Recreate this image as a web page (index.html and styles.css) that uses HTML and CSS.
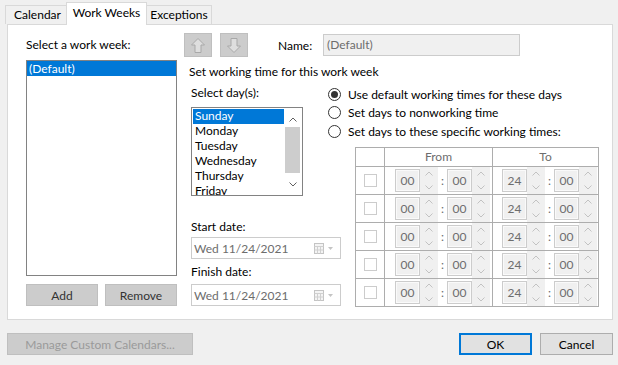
FILE: index.html
```html
<!DOCTYPE html>
<html>
<head>
<meta charset="utf-8">
<link rel="stylesheet" href="styles.css">
</head>
<body>
<div class="dialog">
  <div class="tabs">
    <div class="tab tab-cal">Calendar</div>
    <div class="tab tab-active">Work Weeks</div>
    <div class="tab tab-exc">Exceptions</div>
  </div>
  <div class="panel">
    <div class="left">
      <div class="lbl">Select a work week:</div>
      <div class="weeklist"><div class="sel-row">(Default)</div></div>
      <div class="left-btns"><button class="gbtn">Add</button><button class="gbtn">Remove</button></div>
    </div>
    <div class="right">
      <div class="toprow">
        <div class="arrowbtn"><svg width="14" height="15" viewBox="0 0 14 15"><polygon points="7,0.5 13.5,7 10,7 10,14.5 4,14.5 4,7 0.5,7" fill="#dedede" stroke="#a8a8a8" stroke-width="1"/></svg></div>
        <div class="arrowbtn"><svg width="14" height="15" viewBox="0 0 14 15"><polygon points="7,14.5 13.5,8 10,8 10,0.5 4,0.5 4,8 0.5,8" fill="#dedede" stroke="#a8a8a8" stroke-width="1"/></svg></div>
        <div class="name-lbl">Name:</div>
        <div class="name-input">(Default)</div>
      </div>
      <div class="section-title">Set working time for this work week</div>
      <div class="work">
        <div class="days">
          <div class="lbl">Select day(s):</div>
          <div class="daylist">
            <div class="items">
              <div class="item sel">Sunday</div>
              <div class="item">Monday</div>
              <div class="item">Tuesday</div>
              <div class="item">Wednesday</div>
              <div class="item">Thursday</div>
              <div class="item">Friday</div>
            </div>
            <div class="vscroll">
              <div class="sbtn"><svg width="8" height="5" viewBox="0 0 8 5"><polyline points="0.5,4.5 4,1 7.5,4.5" fill="none" stroke="#606060" stroke-width="1"/></svg></div>
              <div class="thumb"></div>
              <div class="sbtn sbtn-down"><svg width="8" height="5" viewBox="0 0 8 5"><polyline points="0.5,0.5 4,4 7.5,0.5" fill="none" stroke="#606060" stroke-width="1"/></svg></div>
            </div>
          </div>
          <div class="lbl lbl-start">Start date:</div>
          <div class="datebox"><span>Wed 11/24/2021</span>
            <svg class="calicon" width="20" height="11" viewBox="0 0 20 11"><rect x="0.5" y="0.5" width="9" height="10" fill="#f4f4f4" stroke="#c4c4c4"/><path d="M0.5 3.5H9.5M3.5 3.5V10.5M6.5 3.5V10.5M0.5 7H9.5" stroke="#d0d0d0" fill="none"/><polygon points="14,4 19,4 16.5,7" fill="#c4c4c4"/></svg>
          </div>
          <div class="lbl lbl-finish">Finish date:</div>
          <div class="datebox"><span>Wed 11/24/2021</span>
            <svg class="calicon" width="20" height="11" viewBox="0 0 20 11"><rect x="0.5" y="0.5" width="9" height="10" fill="#f4f4f4" stroke="#c4c4c4"/><path d="M0.5 3.5H9.5M3.5 3.5V10.5M6.5 3.5V10.5M0.5 7H9.5" stroke="#d0d0d0" fill="none"/><polygon points="14,4 19,4 16.5,7" fill="#c4c4c4"/></svg>
          </div>
        </div>
        <div class="opts">
          <div class="radio-row"><span class="radio on"></span>Use default working times for these days</div>
          <div class="radio-row"><span class="radio"></span>Set days to nonworking time</div>
          <div class="radio-row third"><span class="radio"></span>Set days to these specific working times:</div>
          <div class="tgrid">
            <div class="cell"></div>
            <div class="cell hdr">From</div>
            <div class="cell hdr">To</div>

            <div class="cell chk"><span class="cb"></span></div>
            <div class="cell time from"><span class="tbox">00</span><span class="spin"><svg width="8" height="5" viewBox="0 0 8 5"><polyline points="0.5,4.5 4,1 7.5,4.5" fill="none" stroke="#c2c2c2"/></svg><svg width="8" height="5" viewBox="0 0 8 5"><polyline points="0.5,0.5 4,4 7.5,0.5" fill="none" stroke="#c2c2c2"/></svg></span><span class="colon">:</span><span class="tbox">00</span><span class="spin"><svg width="8" height="5" viewBox="0 0 8 5"><polyline points="0.5,4.5 4,1 7.5,4.5" fill="none" stroke="#c2c2c2"/></svg><svg width="8" height="5" viewBox="0 0 8 5"><polyline points="0.5,0.5 4,4 7.5,0.5" fill="none" stroke="#c2c2c2"/></svg></span></div>
            <div class="cell time to"><span class="tbox">24</span><span class="spin"><svg width="8" height="5" viewBox="0 0 8 5"><polyline points="0.5,4.5 4,1 7.5,4.5" fill="none" stroke="#c2c2c2"/></svg><svg width="8" height="5" viewBox="0 0 8 5"><polyline points="0.5,0.5 4,4 7.5,0.5" fill="none" stroke="#c2c2c2"/></svg></span><span class="colon">:</span><span class="tbox">00</span><span class="spin"><svg width="8" height="5" viewBox="0 0 8 5"><polyline points="0.5,4.5 4,1 7.5,4.5" fill="none" stroke="#c2c2c2"/></svg><svg width="8" height="5" viewBox="0 0 8 5"><polyline points="0.5,0.5 4,4 7.5,0.5" fill="none" stroke="#c2c2c2"/></svg></span></div>

            <div class="cell chk"><span class="cb"></span></div>
            <div class="cell time from"><span class="tbox">00</span><span class="spin"><svg width="8" height="5" viewBox="0 0 8 5"><polyline points="0.5,4.5 4,1 7.5,4.5" fill="none" stroke="#c2c2c2"/></svg><svg width="8" height="5" viewBox="0 0 8 5"><polyline points="0.5,0.5 4,4 7.5,0.5" fill="none" stroke="#c2c2c2"/></svg></span><span class="colon">:</span><span class="tbox">00</span><span class="spin"><svg width="8" height="5" viewBox="0 0 8 5"><polyline points="0.5,4.5 4,1 7.5,4.5" fill="none" stroke="#c2c2c2"/></svg><svg width="8" height="5" viewBox="0 0 8 5"><polyline points="0.5,0.5 4,4 7.5,0.5" fill="none" stroke="#c2c2c2"/></svg></span></div>
            <div class="cell time to"><span class="tbox">24</span><span class="spin"><svg width="8" height="5" viewBox="0 0 8 5"><polyline points="0.5,4.5 4,1 7.5,4.5" fill="none" stroke="#c2c2c2"/></svg><svg width="8" height="5" viewBox="0 0 8 5"><polyline points="0.5,0.5 4,4 7.5,0.5" fill="none" stroke="#c2c2c2"/></svg></span><span class="colon">:</span><span class="tbox">00</span><span class="spin"><svg width="8" height="5" viewBox="0 0 8 5"><polyline points="0.5,4.5 4,1 7.5,4.5" fill="none" stroke="#c2c2c2"/></svg><svg width="8" height="5" viewBox="0 0 8 5"><polyline points="0.5,0.5 4,4 7.5,0.5" fill="none" stroke="#c2c2c2"/></svg></span></div>

            <div class="cell chk"><span class="cb"></span></div>
            <div class="cell time from"><span class="tbox">00</span><span class="spin"><svg width="8" height="5" viewBox="0 0 8 5"><polyline points="0.5,4.5 4,1 7.5,4.5" fill="none" stroke="#c2c2c2"/></svg><svg width="8" height="5" viewBox="0 0 8 5"><polyline points="0.5,0.5 4,4 7.5,0.5" fill="none" stroke="#c2c2c2"/></svg></span><span class="colon">:</span><span class="tbox">00</span><span class="spin"><svg width="8" height="5" viewBox="0 0 8 5"><polyline points="0.5,4.5 4,1 7.5,4.5" fill="none" stroke="#c2c2c2"/></svg><svg width="8" height="5" viewBox="0 0 8 5"><polyline points="0.5,0.5 4,4 7.5,0.5" fill="none" stroke="#c2c2c2"/></svg></span></div>
            <div class="cell time to"><span class="tbox">24</span><span class="spin"><svg width="8" height="5" viewBox="0 0 8 5"><polyline points="0.5,4.5 4,1 7.5,4.5" fill="none" stroke="#c2c2c2"/></svg><svg width="8" height="5" viewBox="0 0 8 5"><polyline points="0.5,0.5 4,4 7.5,0.5" fill="none" stroke="#c2c2c2"/></svg></span><span class="colon">:</span><span class="tbox">00</span><span class="spin"><svg width="8" height="5" viewBox="0 0 8 5"><polyline points="0.5,4.5 4,1 7.5,4.5" fill="none" stroke="#c2c2c2"/></svg><svg width="8" height="5" viewBox="0 0 8 5"><polyline points="0.5,0.5 4,4 7.5,0.5" fill="none" stroke="#c2c2c2"/></svg></span></div>

            <div class="cell chk"><span class="cb"></span></div>
            <div class="cell time from"><span class="tbox">00</span><span class="spin"><svg width="8" height="5" viewBox="0 0 8 5"><polyline points="0.5,4.5 4,1 7.5,4.5" fill="none" stroke="#c2c2c2"/></svg><svg width="8" height="5" viewBox="0 0 8 5"><polyline points="0.5,0.5 4,4 7.5,0.5" fill="none" stroke="#c2c2c2"/></svg></span><span class="colon">:</span><span class="tbox">00</span><span class="spin"><svg width="8" height="5" viewBox="0 0 8 5"><polyline points="0.5,4.5 4,1 7.5,4.5" fill="none" stroke="#c2c2c2"/></svg><svg width="8" height="5" viewBox="0 0 8 5"><polyline points="0.5,0.5 4,4 7.5,0.5" fill="none" stroke="#c2c2c2"/></svg></span></div>
            <div class="cell time to"><span class="tbox">24</span><span class="spin"><svg width="8" height="5" viewBox="0 0 8 5"><polyline points="0.5,4.5 4,1 7.5,4.5" fill="none" stroke="#c2c2c2"/></svg><svg width="8" height="5" viewBox="0 0 8 5"><polyline points="0.5,0.5 4,4 7.5,0.5" fill="none" stroke="#c2c2c2"/></svg></span><span class="colon">:</span><span class="tbox">00</span><span class="spin"><svg width="8" height="5" viewBox="0 0 8 5"><polyline points="0.5,4.5 4,1 7.5,4.5" fill="none" stroke="#c2c2c2"/></svg><svg width="8" height="5" viewBox="0 0 8 5"><polyline points="0.5,0.5 4,4 7.5,0.5" fill="none" stroke="#c2c2c2"/></svg></span></div>

            <div class="cell chk"><span class="cb"></span></div>
            <div class="cell time from"><span class="tbox">00</span><span class="spin"><svg width="8" height="5" viewBox="0 0 8 5"><polyline points="0.5,4.5 4,1 7.5,4.5" fill="none" stroke="#c2c2c2"/></svg><svg width="8" height="5" viewBox="0 0 8 5"><polyline points="0.5,0.5 4,4 7.5,0.5" fill="none" stroke="#c2c2c2"/></svg></span><span class="colon">:</span><span class="tbox">00</span><span class="spin"><svg width="8" height="5" viewBox="0 0 8 5"><polyline points="0.5,4.5 4,1 7.5,4.5" fill="none" stroke="#c2c2c2"/></svg><svg width="8" height="5" viewBox="0 0 8 5"><polyline points="0.5,0.5 4,4 7.5,0.5" fill="none" stroke="#c2c2c2"/></svg></span></div>
            <div class="cell time to"><span class="tbox">24</span><span class="spin"><svg width="8" height="5" viewBox="0 0 8 5"><polyline points="0.5,4.5 4,1 7.5,4.5" fill="none" stroke="#c2c2c2"/></svg><svg width="8" height="5" viewBox="0 0 8 5"><polyline points="0.5,0.5 4,4 7.5,0.5" fill="none" stroke="#c2c2c2"/></svg></span><span class="colon">:</span><span class="tbox">00</span><span class="spin"><svg width="8" height="5" viewBox="0 0 8 5"><polyline points="0.5,4.5 4,1 7.5,4.5" fill="none" stroke="#c2c2c2"/></svg><svg width="8" height="5" viewBox="0 0 8 5"><polyline points="0.5,0.5 4,4 7.5,0.5" fill="none" stroke="#c2c2c2"/></svg></span></div>
          </div>
        </div>
      </div>
    </div>
  </div>
  <div class="footer">
    <button class="manage">Manage Custom Calendars...</button>
    <button class="ok">OK</button>
    <button class="cancel">Cancel</button>
  </div>
</div>
</body>
</html>
```
FILE: styles.css
```css
* { box-sizing: border-box; }
html, body { margin: 0; padding: 0; }
body {
  width: 618px;
  height: 365px;
  overflow: hidden;
  background: #f0f0f0;
  font-family: Lato, "Noto Sans", "DejaVu Sans", sans-serif;
  font-size: 12px;
  color: #000;
}
.dialog { padding-top: 2px; }

.tabs {
  display: flex;
  align-items: flex-end;
  height: 23px;
  margin-bottom: -1px;
  padding-left: 5px;
  position: relative;
  z-index: 1;
}
.tab {
  height: 19px;
  margin-bottom: 1px;
  border: 1px solid #d9d9d9;
  border-bottom: none;
  background: #f0f0f0;
  display: flex;
  align-items: center;
  justify-content: center;
  line-height: 16px;
}
.tab-cal { width: 61px; border-right: none; padding-left: 3px; }
.tab-active {
  width: 81px;
  height: 23px;
  margin-bottom: 0;
  background: #fff;
  padding-bottom: 2px;
}
.tab-exc { width: 65px; border-left: none; }

.panel {
  margin-left: 7px;
  width: 606px;
  height: 296px;
  border: 1px solid #d9d9d9;
  background: #fff;
  display: flex;
}
.lbl { line-height: 16px; height: 16px; white-space: nowrap; }

.left {
  width: 151px;
  margin-left: 18px;
  padding-top: 12px;
  display: flex;
  flex-direction: column;
}
.weeklist {
  margin-top: 7px;
  height: 216px;
  border: 1px solid #828282;
}
.sel-row {
  height: 15px;
  line-height: 15px;
  background: #0078d7;
  color: #fff;
  padding-left: 2px;
}
.left-btns {
  display: flex;
  justify-content: space-between;
  margin-top: 8px;
}
.gbtn {
  width: 72px;
  height: 22px;
  padding: 0;
  font: inherit;
  color: #333;
  background: #cccccc;
  border: 1px solid #bfbfbf;
}

.right {
  margin-left: 7px;
  padding-top: 8px;
  flex: 1;
}
.toprow {
  display: flex;
  align-items: center;
  height: 24px;
}
.arrowbtn {
  width: 28px;
  height: 24px;
  background: #cccccc;
  border: 1px solid #bfbfbf;
  display: flex;
  align-items: center;
  justify-content: center;
}
.arrowbtn + .arrowbtn { margin-left: 8px; }
.name-lbl { margin-left: 30px; width: 45px; }
.name-input {
  width: 197px;
  height: 22px;
  border: 1px solid #cccccc;
  background: #f0f0f0;
  color: #6d6d6d;
  padding-left: 3px;
  line-height: 20px;
}
.section-title {
  margin-top: 7px;
  margin-left: 5px;
  line-height: 16px;
}

.work { display: flex; }
.days {
  width: 137px;
  margin-left: 7px;
  padding-top: 5px;
}
.daylist {
  margin-top: 6px;
  width: 112px;
  height: 89px;
  border: 1px solid #828282;
  padding: 1px 1px 0 1px;
  display: flex;
}
.items { flex: 1; overflow: hidden; }
.item {
  height: 15px;
  line-height: 13px;
  padding-left: 2px;
  white-space: nowrap;
}
.item.sel { background: #0078d7; color: #fff; }
.vscroll {
  width: 17px;
  margin-bottom: 1px;
  display: flex;
  flex-direction: column;
  align-items: center;
}
.sbtn {
  height: 17px;
  width: 17px;
  display: flex;
  align-items: center;
  justify-content: center;
  padding-top: 4px;
}
.sbtn-down { margin-top: auto; padding-top: 0; padding-bottom: 2px; }
.thumb {
  margin-top: 1px;
  width: 15px;
  height: 46px;
  background: #cdcdcd;
}
.lbl-start { margin-top: 23px; }
.lbl-finish { margin-top: 5px; }
.datebox {
  margin-top: 2px;
  width: 150px;
  height: 22px;
  border: 1px solid #cccccc;
  background: #fff;
  color: #6d6d6d;
  display: flex;
  align-items: center;
  padding-left: 2px;
}
.lbl-finish + .datebox { margin-top: 4px; }
.calicon { margin-left: auto; margin-right: 6px; }

.opts { padding-top: 5px; }
.radio-row {
  display: flex;
  align-items: center;
  height: 18px;
  white-space: nowrap;
}
.radio-row.third { margin-top: 1px; }
.radio {
  width: 13px;
  height: 13px;
  border: 1px solid #333;
  border-radius: 50%;
  margin-right: 7px;
  display: flex;
  align-items: center;
  justify-content: center;
  flex: none;
}
.radio.on::after {
  content: "";
  width: 7px;
  height: 7px;
  border-radius: 50%;
  background: #333;
}

.tgrid {
  margin-top: 7px;
  margin-left: 27px;
  width: 244px;
  display: grid;
  grid-template-columns: 28px 107px 105px;
  grid-template-rows: 18px repeat(5, 27px);
  gap: 1px;
  padding: 1px;
  background: #adadad;
}
.cell { background: #fff; }
.hdr {
  color: #6d6d6d;
  text-align: center;
  line-height: 18px;
}
.chk { display: flex; align-items: center; justify-content: center; }
.cb {
  width: 13px;
  height: 13px;
  border: 1px solid #cccccc;
  background: #fff;
}
.time { display: flex; align-items: stretch; }
.time.from { padding-left: 10px; }
.time.to { padding-left: 9px; }
.tbox {
  width: 25px;
  height: 23px;
  align-self: center;
  border: 1px solid #cccccc;
  background: #f0f0f0;
  box-shadow: inset 0 0 0 1px #fafafa;
  color: #6d6d6d;
  text-align: center;
  line-height: 21px;
}
.spin {
  width: 18px;
  background: #f0f0f0;
  display: flex;
  flex-direction: column;
  justify-content: space-between;
  align-items: center;
  padding: 4px 0 4px;
}
.colon {
  width: 9px;
  display: flex;
  align-items: center;
  justify-content: center;
  color: #6d6d6d;
}

.footer {
  display: flex;
  margin-top: 13px;
  padding: 0 5px 0 7px;
  height: 22px;
}
.footer button {
  height: 22px;
  padding: 0;
  font: inherit;
}
.manage {
  width: 186px;
  background: #cccccc;
  border: 1px solid #bfbfbf;
  color: #9a9a9a;
}
.ok {
  margin-left: auto;
  width: 73px;
  border: 2px solid #0078d7;
  background: #e1e1e1;
  color: #000;
}
.cancel {
  margin-left: 8px;
  width: 73px;
  border: 1px solid #adadad;
  background: #e1e1e1;
  color: #000;
}
```
